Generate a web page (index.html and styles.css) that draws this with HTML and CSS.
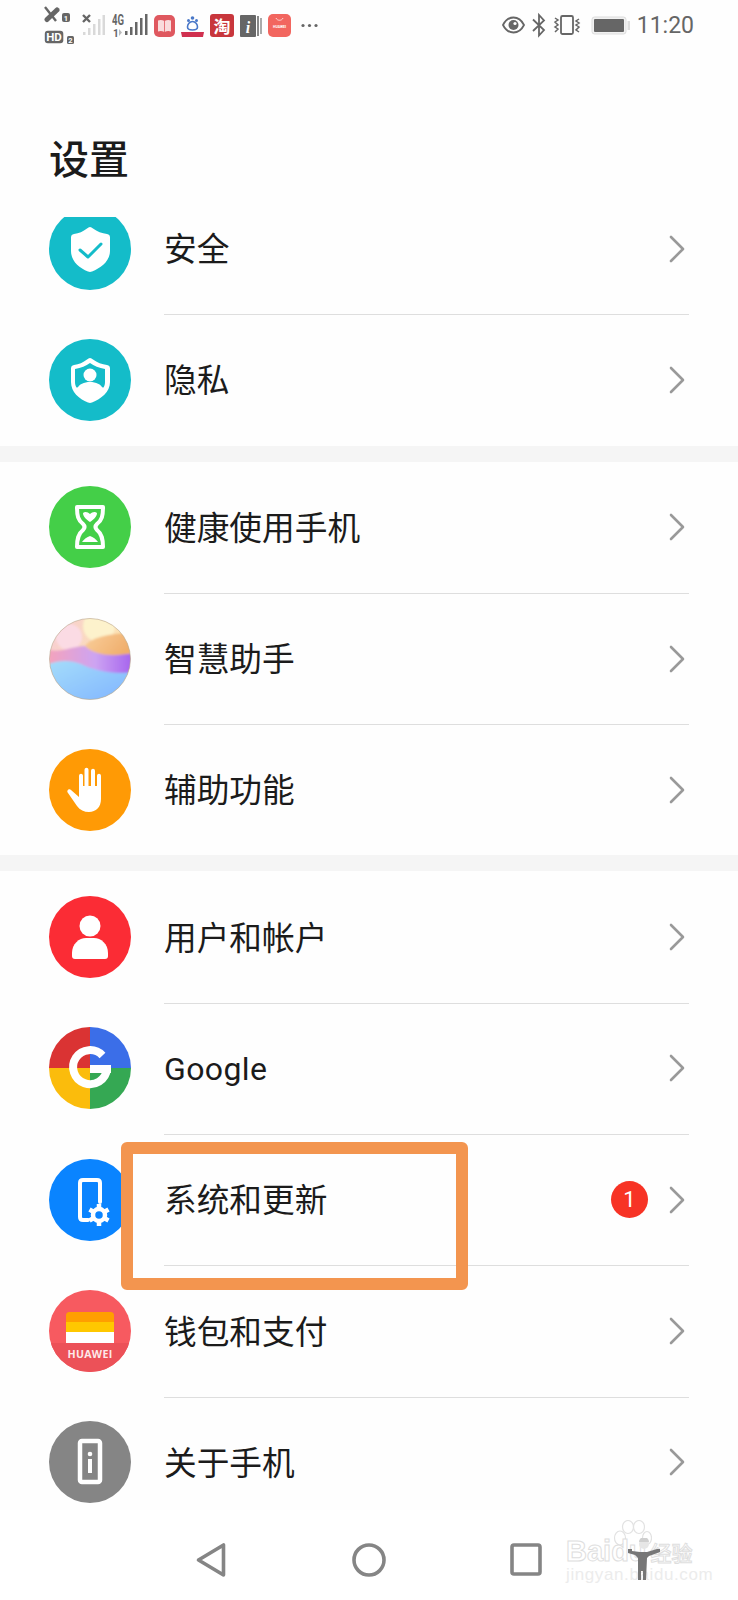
FILE: index.html
```html
<!DOCTYPE html>
<html lang="zh-CN">
<head>
<meta charset="utf-8">
<title>设置</title>
<link rel="stylesheet" href="styles.css">
</head>
<body>
<div class="page">
  <header class="status">
    <svg class="s" width="32" height="52" viewBox="0 0 32 52">
      <path d="M1 7 12 21" class="st-line"/>
      <path d="M3 19.500 13 10" class="st-phone"/>
      <rect x="18" y="13" width="8" height="9" rx="2" class="st-fill"/>
      <text x="22" y="20.500" class="st-mini-w">1</text>
      <rect x="0.800" y="30.800" width="18.500" height="12.500" rx="3" class="st-fill"/>
      <text x="10" y="41" class="st-hd">HD</text>
      <rect x="23" y="36" width="7" height="8" rx="1.500" class="st-fill"/>
      <text x="26.500" y="42.600" class="st-mini-w">2</text>
    </svg>
    <svg class="s" width="24" height="52" viewBox="0 0 24 52">
      <path d="M1 15 8 22M8 15 1 22" class="st-line"/>
      <g fill="#d9d9d9"><rect x="1" y="32" width="2.500" height="3"/><rect x="6" y="28" width="2.500" height="7"/><rect x="11" y="24" width="2.500" height="11"/><rect x="16" y="19" width="2.500" height="16"/><rect x="20.500" y="15" width="2.500" height="20"/></g>
    </svg>
    <svg class="s" width="36" height="52" viewBox="0 0 36 52">
      <text x="0" y="25" class="st-4g" textLength="12" lengthAdjust="spacingAndGlyphs">4G</text>
      <text x="1" y="36.500" class="st-4g-one">1</text>
      <path d="M7 29v7l3-3.500z" fill="#bbb"/>
      <g fill="#666"><rect x="13" y="31" width="2.500" height="4"/><rect x="18" y="27" width="2.500" height="8"/><rect x="23" y="22" width="2.500" height="13"/><rect x="28" y="18" width="2.500" height="17"/><rect x="33" y="14" width="2.500" height="21"/></g>
    </svg>
    <svg class="s" width="21" height="52" viewBox="0 0 21 52">
      <rect x="0" y="15" width="21" height="22" rx="5" fill="#df585f"/>
      <path d="M4 20.500c2-.8 4-.8 6.500.5 2.500-1.300 4.500-1.300 6.500-.5v11c-2-.8-4-.8-6.500.5-2.500-1.300-4.500-1.300-6.500-.5z" fill="#f9dcdc"/>
      <path d="M10.500 21v11" stroke="#df585f" stroke-width=".8"/>
    </svg>
    <svg class="s" width="23" height="52" viewBox="0 0 23 52">
      <g fill="#4a78c8"><circle cx="11.500" cy="18" r="1.800"/><circle cx="7.500" cy="20.500" r="1.500"/><circle cx="15.500" cy="20.500" r="1.500"/></g>
      <path d="M11.500 21.500c3 0 5 3 5 5.500 0 2-2 3-5 3s-5-1-5-3c0-2.500 2-5.500 5-5.500z" fill="none" stroke="#4a78c8" stroke-width="1.600"/>
      <path d="M0 32h23l-1 5H1z" fill="#d0304f"/>
    </svg>
    <svg class="s" width="24" height="52" viewBox="0 0 24 52">
      <rect x="0" y="14" width="24" height="23" rx="3" fill="#c8363c"/>
      <text x="12" y="32.500" class="st-tao">淘</text>
    </svg>
    <svg class="s" width="22" height="52" viewBox="0 0 22 52">
      <rect x="0" y="15" width="16" height="22" rx="1" fill="#666"/>
      <rect x="17" y="16" width="2" height="20" fill="#888"/>
      <rect x="20" y="18" width="2" height="16" fill="#aaa"/>
      <text x="8" y="33" class="st-i">i</text>
    </svg>
    <svg class="s" width="23" height="52" viewBox="0 0 23 52">
      <rect x="0" y="14" width="23" height="23" rx="5" fill="#f2665f"/>
      <path d="M8 18c1 3 6 3 7 0" fill="none" stroke="#fff" stroke-width=".7"/>
      <text x="11.500" y="28" class="st-hw">HUAWEI</text>
    </svg>
    <svg class="s s-dots" width="17" height="52" viewBox="0 0 17 52">
      <circle cx="2" cy="25.500" r="1.600" fill="#666"/><circle cx="8.500" cy="25.500" r="1.600" fill="#666"/><circle cx="15" cy="25.500" r="1.600" fill="#666"/>
    </svg>
    <div class="status-right">
      <svg class="s" width="23" height="52" viewBox="0 0 23 52">
        <path d="M1 25c5-10 16-10 21 0-5 10-16 10-21 0z" fill="none" stroke="#666" stroke-width="1.800"/>
        <circle cx="11.500" cy="25" r="5" fill="#666"/><circle cx="13" cy="23.500" r="1.600" fill="#fff"/>
      </svg>
      <svg class="s" width="14" height="52" viewBox="0 0 14 52">
        <path d="M1 19.500 12 30 7 35.500V15l5 5.500L1 31" fill="none" stroke="#666" stroke-width="1.800"/>
      </svg>
      <svg class="s" width="28" height="52" viewBox="0 0 28 52">
        <rect x="8" y="16" width="12" height="18" rx="1.500" fill="none" stroke="#666" stroke-width="1.800"/>
        <path d="M2 18l3 2-3 2 3 3-3 2 3 2-3 3M26 19l-3 2 3 2-3 2 3 2-3 3 3 2" fill="none" stroke="#666" stroke-width="1.500"/>
      </svg>
      <svg class="s" width="42" height="52" viewBox="0 0 42 52">
        <rect x="4" y="17" width="34" height="17" rx="2.500" fill="#f1f1f1" stroke="#ddd"/>
        <rect x="6" y="19" width="30" height="13" rx="1" fill="#666"/>
        <rect x="39.500" y="21" width="2.500" height="9" fill="#ddd"/>
      </svg>
      <span class="time">11:20</span>
    </div>
  </header>

  <h1 class="title">设置</h1>

  <main class="list">
    <section class="group group-first">
      <div class="row">
        <svg class="icon" viewBox="0 0 82 82"><circle cx="41" cy="41" r="41" fill="#14bcc9"/>
          <path d="M41 19c1 0 2 .5 3 1.500 4 3 9 5 14 5.500 2 .3 3 1.500 3 3.500V43c0 10-9 17-18 20.500-1.500.6-2.500.6-4 0C30 60 22 53 22 43V29.500c0-2 1-3.200 3-3.500 5-.5 9-2.500 13-5.500 1-1 2-1.500 3-1.500z" fill="#fff"/>
          <path d="M31 42l8 7 13-13" fill="none" stroke="#14bcc9" stroke-width="3" stroke-linecap="round" stroke-linejoin="round"/></svg>
        <div class="body"><span class="label">安全</span><svg class="chev" viewBox="0 0 16 28"><path d="M2 2l12 12L2 26"/></svg></div>
      </div>
      <div class="row">
        <svg class="icon" viewBox="0 0 82 82"><circle cx="41" cy="41" r="41" fill="#14bcc9"/>
          <path d="M41 19c1 0 2 .5 3 1.500 4 3 9 5 14 5.500 2 .3 3 1.500 3 3.500V43c0 10-9 17-18 20.500-1.500.6-2.500.6-4 0C30 60 22 53 22 43V29.500c0-2 1-3.200 3-3.500 5-.5 9-2.500 13-5.500 1-1 2-1.500 3-1.500z" fill="#fff"/>
          <path d="M41 24c4 3 9 5 15 6v13c0 2-.5 4-1.500 5.500h-27C26.500 47 26 45 26 43V30c6-1 11-3 15-6z" fill="#14bcc9"/>
          <circle cx="41" cy="36" r="6.500" fill="#fff"/>
          <path d="M28 50c2-5 7-7 13-7s11 2 13 7c-3 4-8 7-13 9-5-2-10-5-13-9z" fill="#fff"/></svg>
        <div class="body body-last"><span class="label">隐私</span><svg class="chev" viewBox="0 0 16 28"><path d="M2 2l12 12L2 26"/></svg></div>
      </div>
    </section>

    <section class="group">
      <div class="row">
        <svg class="icon" viewBox="0 0 82 82"><circle cx="41" cy="41" r="41" fill="#44cf48"/>
          <path d="M28 21h26c0 9-1 13-6 17-2 2-2 4 0 6 5 4 6 9 6 17H28c0-8 1-13 6-17 2-2 2-4 0-6-5-4-6-8-6-17z" fill="none" stroke="#fff" stroke-width="4" stroke-linejoin="round"/>
          <path d="M34 27c2-2 5-1 7 1 2-2 5-3 7-1 0 4-4 7-7 9-3-2-7-5-7-9z" fill="#fff"/>
          <path d="M33 56c2-3 5-5 8-6 3 1 6 3 8 6z" fill="#fff"/></svg>
        <div class="body"><span class="label">健康使用手机</span><svg class="chev" viewBox="0 0 16 28"><path d="M2 2l12 12L2 26"/></svg></div>
      </div>
      <div class="row">
        <svg class="icon" viewBox="0 0 82 82">
          <defs>
            <clipPath id="orb"><circle cx="41" cy="41" r="40.500"/></clipPath>
            <filter id="soft" x="-10%" y="-10%" width="120%" height="120%"><feGaussianBlur stdDeviation="1.200"/></filter>
            <linearGradient id="orb-top" x1="0" y1="0" x2="1" y2=".5"><stop offset="0" stop-color="#f7cbd6"/><stop offset="1" stop-color="#fde9a8"/></linearGradient>
            <linearGradient id="orb-org" x1="0" y1="0" x2="1" y2=".4"><stop offset="0" stop-color="#f9cf9c"/><stop offset="1" stop-color="#f0ae6c"/></linearGradient>
            <linearGradient id="orb-mid" x1="0" y1="0" x2="1" y2="0"><stop offset="0" stop-color="#f4a3bd"/><stop offset=".55" stop-color="#cda4f2"/><stop offset="1" stop-color="#a562ee"/></linearGradient>
            <linearGradient id="orb-low" x1="0" y1="0" x2="1" y2="1"><stop offset="0" stop-color="#a4dcfb"/><stop offset="1" stop-color="#7fb3ff"/></linearGradient>
          </defs>
          <g clip-path="url(#orb)">
            <rect width="82" height="82" fill="url(#orb-top)"/>
            <g filter="url(#soft)">
              <circle cx="20" cy="19" r="13" fill="#fbdbe4"/>
              <circle cx="50" cy="8" r="16" fill="#fdf2cc"/>
              <path d="M36 28c5-8 24-13 48-13v22c-16 3-40 3-48-9z" fill="url(#orb-org)"/>
              <path d="M0 32c12 3 24-4 36-4 10 10 30 11 48 7v30H0z" fill="url(#orb-mid)"/>
              <path d="M0 46c10-4 22-4 32 0 14 7 34 11 52 8v30H0z" fill="url(#orb-low)"/>
            </g>
          </g>
          <circle cx="41" cy="41" r="40.500" fill="none" stroke="#b9a98f" stroke-opacity=".6"/></svg>
        <div class="body"><span class="label">智慧助手</span><svg class="chev" viewBox="0 0 16 28"><path d="M2 2l12 12L2 26"/></svg></div>
      </div>
      <div class="row">
        <svg class="icon" viewBox="0 0 82 82"><circle cx="41" cy="41" r="41" fill="#ff9a05"/>
          <path d="M30 27c0-3 4-3 4 0v10h1.500V21c0-3 4-3 4 0v16H42V22c0-3 4-3 4 0v15h2V27c0-3 4-3 4 0v23c0 8-5 13-12 13-5 0-9-2-12-6L19 44c-2-2 1-5 3-3l8 7z" fill="#fff"/></svg>
        <div class="body body-last"><span class="label">辅助功能</span><svg class="chev" viewBox="0 0 16 28"><path d="M2 2l12 12L2 26"/></svg></div>
      </div>
    </section>

    <section class="group group-end">
      <div class="row">
        <svg class="icon" viewBox="0 0 82 82"><circle cx="41" cy="41" r="41" fill="#fb2c35"/>
          <circle cx="41" cy="30" r="10.500" fill="#fff"/>
          <path d="M23 57c0-9 7-15 14-15h8c7 0 14 6 14 15v3c0 2-1 3-3 3H26c-2 0-3-1-3-3z" fill="#fff"/></svg>
        <div class="body"><span class="label">用户和帐户</span><svg class="chev" viewBox="0 0 16 28"><path d="M2 2l12 12L2 26"/></svg></div>
      </div>
      <div class="row">
        <svg class="icon" viewBox="0 0 82 82">
          <path d="M41 41V0a41 41 0 0 0-41 41z" fill="#da3333"/>
          <path d="M41 41V0a41 41 0 0 1 41 41z" fill="#3b6ee8"/>
          <path d="M41 41H0a41 41 0 0 0 41 41z" fill="#fbbc0c"/>
          <path d="M41 41h41a41 41 0 0 1-41 41z" fill="#35a853"/>
          <path d="M53.500 28.500A17 17 0 1 0 58 42" fill="none" stroke="#fff" stroke-width="8"/>
          <path d="M41 38h21v8H41z" fill="#fff"/></svg>
        <div class="body"><span class="label label-latin">Google</span><svg class="chev" viewBox="0 0 16 28"><path d="M2 2l12 12L2 26"/></svg></div>
      </div>
      <div class="row">
        <svg class="icon" viewBox="0 0 82 82"><circle cx="41" cy="41" r="41" fill="#0a84ff"/>
          <path d="M39 61h-5c-2 0-3-1-3-3V24c0-2 1-3 3-3h14c2 0 3 1 3 3v19" fill="none" stroke="#fff" stroke-width="4" stroke-linecap="round"/>
          <circle cx="50" cy="56" r="6" fill="none" stroke="#fff" stroke-width="4.500"/>
          <path d="M50 45v4M50 63v4M40.500 50.500l3.400 2M56 59.500l3.500 2M40.500 61.500l3.400-2M56 52.500l3.500-2" stroke="#fff" stroke-width="4.500"/></svg>
        <div class="body"><span class="label">系统和更新</span><span class="badge">1</span><svg class="chev" viewBox="0 0 16 28"><path d="M2 2l12 12L2 26"/></svg></div>
      </div>
      <div class="row">
        <svg class="icon" viewBox="0 0 82 82">
          <defs><clipPath id="wallet"><circle cx="41" cy="41" r="41"/></clipPath></defs>
          <g clip-path="url(#wallet)">
            <rect width="82" height="82" fill="#f75a60"/>
            <rect y="53" width="82" height="29" fill="#ec5158"/>
          </g>
          <path d="M17 26c0-3 1-4 4-4h40c3 0 4 1 4 4v6H17z" fill="#ff9f00"/>
          <path d="M17 32h48v10H17z" fill="#ffc800"/>
          <path d="M17 42h48v11H17z" fill="#fff"/>
          <text x="41" y="68" class="hw-text">HUAWEI</text></svg>
        <div class="body"><span class="label">钱包和支付</span><svg class="chev" viewBox="0 0 16 28"><path d="M2 2l12 12L2 26"/></svg></div>
      </div>
      <div class="row">
        <svg class="icon" viewBox="0 0 82 82"><circle cx="41" cy="41" r="41" fill="#858585"/>
          <rect x="31" y="20" width="20" height="41" rx="2" fill="none" stroke="#fff" stroke-width="4.500"/>
          <circle cx="41" cy="33" r="2.300" fill="#fff"/>
          <rect x="39" y="38" width="4" height="14" fill="#fff"/></svg>
        <div class="body body-last"><span class="label">关于手机</span><svg class="chev" viewBox="0 0 16 28"><path d="M2 2l12 12L2 26"/></svg></div>
      </div>
    </section>
  </main>

  <nav class="nav">
    <svg class="nav-back" width="30" height="36" viewBox="0 0 30 36"><path d="M27.500 3v30L2.500 18z"/></svg>
    <svg class="nav-home" width="34" height="36" viewBox="0 0 34 36"><circle cx="17" cy="18" r="15"/></svg>
    <svg class="nav-recent" width="32" height="36" viewBox="0 0 32 36"><rect x="2" y="3" width="28" height="29" rx="2"/></svg>
  </nav>

  <div class="highlight"></div>

  <div class="watermark">
    <svg class="wm-paw" width="40" height="42" viewBox="0 0 40 42">
      <ellipse cx="8" cy="18" rx="5.500" ry="7"/><ellipse cx="16" cy="7" rx="5.500" ry="6.500"/><ellipse cx="27" cy="7" rx="5.500" ry="6.500"/><ellipse cx="35" cy="18" rx="4.500" ry="6.500"/>
    </svg>
    <div class="wm-line"><span class="wm-bai">Bai</span><span class="wm-du">du</span><span class="wm-jy">经验</span></div>
    <div class="wm-url">jingyan.baidu.com</div>
    <svg class="wm-person" width="36" height="44" viewBox="0 0 36 44">
      <circle cx="18" cy="6" r="5" fill="#e6e6e6"/>
      <path d="M13 4a5 5 0 0 1 10 0z" fill="#cfcfcf"/>
      <path d="M2 11h4v2l8 1h7l10-3h3v3l-11 4-2 2-1 22h-3v-9h-2v9h-3V20l-3-3-7-2z" fill="#777"/>
    </svg>
  </div>
</div>
</body>
</html>
```

FILE: styles.css
```css
* { box-sizing: border-box; }
html, body { margin: 0; padding: 0; background: #fff; }
body { font-family: "Noto Sans CJK SC", "Noto Sans", sans-serif; color: #1b1b1b; }

.page { position: relative; width: 738px; height: 1600px; overflow: hidden; display: flex; flex-direction: column; background: #fefefe; }

/* status bar */
.status { flex: none; height: 52px; padding: 0 44px 0 44px; display: flex; gap: 6px; }
.s { display: block; flex: none; }
.s-dots { margin-left: 4px; }
.status-right { margin-left: auto; display: flex; gap: 7px; align-items: center; }
.time { font: 400 23px/52px Roboto, sans-serif; color: #666; margin-left: 0; }
.st-line { stroke: #666; stroke-width: 2.4; fill: none; }
.st-phone { stroke: #666; stroke-width: 5; fill: none; stroke-linecap: round; }
.st-fill { fill: #666; }
.st-mini-w { font: 700 7.5px Roboto, sans-serif; fill: #fff; text-anchor: middle; }
.st-hd { font: 700 11.5px Roboto, sans-serif; fill: #fff; text-anchor: middle; }
.st-4g { font: 700 14px Roboto, sans-serif; fill: #666; }
.st-4g-one { font: 700 10px Roboto, sans-serif; fill: #666; }
.st-tao { font: 700 17px "Noto Sans CJK SC", sans-serif; fill: #fff; text-anchor: middle; }
.st-i { font: italic 700 16px "Liberation Serif", serif; fill: #fff; text-anchor: middle; }
.st-hw { font: 700 3.5px Roboto, sans-serif; fill: #fff; text-anchor: middle; }

/* title */
.title { flex: none; height: 165px; margin: 0; padding: 80px 0 0 49px; font-size: 40px; line-height: 50px; font-weight: 500; color: #1b1b1b; }

/* list */
.list { flex: 1; min-height: 0; overflow: hidden; }
.group { border-bottom: 16px solid #f5f5f5; }
.group-first { margin-top: -34px; }
.group-end { border-bottom: 0; }
.row { height: 131.3px; display: flex; align-items: center; }
.icon { flex: none; width: 82px; height: 82px; margin-left: 49px; }
.body { flex: 1; height: 100%; margin: 0 49px 0 33px; padding-right: 4px; display: flex; align-items: center; box-shadow: 0 1px 0 #dedede; }
.body-last { box-shadow: none; }
.label { flex: 1; font-size: 32.7px; line-height: 44px; padding-bottom: 3px; color: #1b1b1b; }
.label-latin { font-family: Roboto, sans-serif; font-size: 32px; letter-spacing: .4px; padding: 1px 0 0; }
.chev { flex: none; width: 16px; height: 28px; fill: none; stroke: #999; stroke-width: 2.6; stroke-linecap: round; stroke-linejoin: round; }
.badge { flex: none; width: 37px; height: 37px; margin-right: 21px; border-radius: 50%; background: #f73325; color: #fff; font: 400 22px/37px Roboto, sans-serif; text-align: center; }
.hw-text { font: 700 10.6px "Open Sans", sans-serif; letter-spacing: .3px; fill: #fde8e8; text-anchor: middle; }

/* navigation */
.nav { flex: none; height: 90px; padding: 32px 0 0 196px; display: flex; gap: 126px; align-items: flex-start; background: #fff; }
.nav svg { fill: none; stroke: #858585; stroke-width: 3.6; stroke-linejoin: round; flex: none; }
.nav-recent { margin-left: -2px; }

/* overlays */
.highlight { position: absolute; left: 121px; top: 1142px; width: 347px; height: 148px; border: 12px solid #f3954f; border-radius: 6px; }
.watermark { position: absolute; left: 566px; top: 1518px; width: 136px; height: 70px; color: #fff; }
.wm-paw { position: absolute; left: 46px; top: 2px; fill: #fff; stroke: #e2e2e2; stroke-width: 1.200; }
.wm-line { position: absolute; left: 0; top: 15px; white-space: nowrap; display: flex; align-items: baseline; font: 700 29px/36px "Liberation Sans", sans-serif; color: #fff; -webkit-text-stroke: 1px #dedede; }
.wm-jy { margin-left: 4px; font: 500 21px/36px "Noto Sans CJK SC", sans-serif; }
.wm-url { position: absolute; left: 0; top: 47px; font: 400 17px/20px "Liberation Sans", sans-serif; letter-spacing: .6px; color: #ececec; white-space: nowrap; }
.wm-person { position: absolute; left: 60px; top: 20px; }
```
